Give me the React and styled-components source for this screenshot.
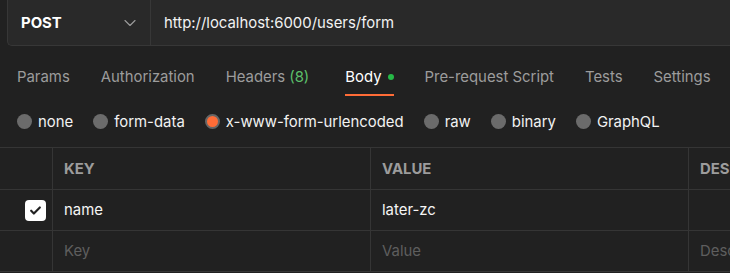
import React from 'react';
import styled, { createGlobalStyle } from 'styled-components';
import { ChevronDown } from 'lucide-react';

const GlobalStyle = createGlobalStyle`
  body {
    margin: 0;
    background: #212121;
    font-family: Inter, "Noto Sans", sans-serif;
    font-size: 14.9px;
    color: #ffffff;
    overflow: hidden;
  }
`;

const Page = styled.div`
  width: 730px;
  height: 273px;
  overflow: hidden;
`;

const UrlRow = styled.div`
  padding-left: 7px;
`;

const UrlBox = styled.div`
  display: flex;
  height: 45px;
  background: #292929;
  border-left: 1px solid #373737;
  border-bottom: 1px solid #373737;
  border-bottom-left-radius: 5px;
`;

const MethodSelect = styled.div`
  width: 143px;
  box-sizing: border-box;
  display: flex;
  align-items: center;
  justify-content: space-between;
  padding: 0 10px 0 13px;
  border-right: 1px solid #373737;
  font-weight: 700;
  color: #ffffff;
  svg {
    color: #9a9a9a;
  }
`;

const UrlText = styled.div`
  display: flex;
  align-items: center;
  padding-left: 13px;
  color: #f2f2f2;
`;

const TabBar = styled.div`
  display: flex;
  gap: 31px;
  margin-top: 14px;
  padding-left: 17px;
`;

const Tab = styled.div`
  height: 34px;
  display: flex;
  align-items: center;
  gap: 6px;
  white-space: nowrap;
  color: ${(p) => (p.active ? '#ffffff' : '#9c9c9c')};
  border-bottom: 2px solid ${(p) => (p.active ? '#ff6c37' : 'transparent')};
`;

const Count = styled.span`
  color: #5cbf6a;
  margin-left: 4px;
  padding-right: 5px;
`;

const Dot = styled.span`
  width: 6px;
  height: 6px;
  border-radius: 50%;
  background: #26b947;
`;

const RadioRow = styled.div`
  height: 51px;
  display: flex;
  align-items: center;
  gap: 20px;
  padding-left: 17px;
`;

const RadioOption = styled.label`
  display: flex;
  align-items: center;
  gap: 6px;
  color: #f2f2f2;
  white-space: nowrap;
`;

const RadioCircle = styled.span`
  width: 15px;
  height: 15px;
  box-sizing: border-box;
  border-radius: 50%;
  background: ${(p) => (p.checked ? '#ff6c37' : '#6b6b6b')};
  border: ${(p) => (p.checked ? '2.5px solid #666666' : 'none')};
`;

const Table = styled.div`
  display: grid;
  grid-template-columns: 52px 318px 318px 1fr;
  border-top: 1px solid #353535;
`;

const Cell = styled.div`
  display: flex;
  align-items: center;
  padding-left: ${(p) => (p.check ? '0' : '11px')};
  justify-content: ${(p) => (p.check ? 'flex-end' : 'flex-start')};
  padding-right: ${(p) => (p.check ? '6px' : '0')};
  border-bottom: 1px solid #353535;
  border-left: ${(p) => (p.first ? 'none' : '1px solid #353535')};
  height: ${(p) => (p.head ? '41px' : '40px')};
  font-weight: ${(p) => (p.head ? 700 : 400)};
  color: ${(p) => (p.head ? '#9c9c9c' : p.placeholder ? '#5e5e5e' : '#f5f5f5')};
  white-space: nowrap;
  overflow: hidden;
`;

const Checkbox = styled.span`
  width: 21px;
  height: 21px;
  border-radius: 4px;
  background: #ffffff;
  display: flex;
  align-items: center;
  justify-content: center;
`;

const tabs = ['Params', 'Authorization', 'Headers', 'Body', 'Pre-request Script', 'Tests', 'Settings'];
const bodyTypes = ['none', 'form-data', 'x-www-form-urlencoded', 'raw', 'binary', 'GraphQL'];

export default function App() {
  return (
    <Page>
      <GlobalStyle />
      <UrlRow>
        <UrlBox>
          <MethodSelect>
            POST
            <ChevronDown size={20} strokeWidth={1.4} />
          </MethodSelect>
          <UrlText>http://localhost:6000/users/form</UrlText>
        </UrlBox>
      </UrlRow>

      <TabBar>
        {tabs.map((t) => (
          <Tab key={t} active={t === 'Body'}>
            <span>
              {t}
              {t === 'Headers' && <Count>(8)</Count>}
            </span>
            {t === 'Body' && <Dot />}
          </Tab>
        ))}
      </TabBar>

      <RadioRow>
        {bodyTypes.map((b) => (
          <RadioOption key={b}>
            <RadioCircle checked={b === 'x-www-form-urlencoded'} />
            {b}
          </RadioOption>
        ))}
      </RadioRow>

      <Table>
        <Cell first head />
        <Cell head>KEY</Cell>
        <Cell head>VALUE</Cell>
        <Cell head>DESCRIPTION</Cell>

        <Cell first check>
          <Checkbox>
            <svg width="13" height="13" viewBox="0 0 24 24" fill="none" stroke="#212121" strokeWidth="4" strokeLinecap="round" strokeLinejoin="round">
              <path d="M4 12.5l5 5L20 6.5" />
            </svg>
          </Checkbox>
        </Cell>
        <Cell>name</Cell>
        <Cell>later-zc</Cell>
        <Cell />

        <Cell first />
        <Cell placeholder>Key</Cell>
        <Cell placeholder>Value</Cell>
        <Cell placeholder>Description</Cell>
      </Table>
    </Page>
  );
}
